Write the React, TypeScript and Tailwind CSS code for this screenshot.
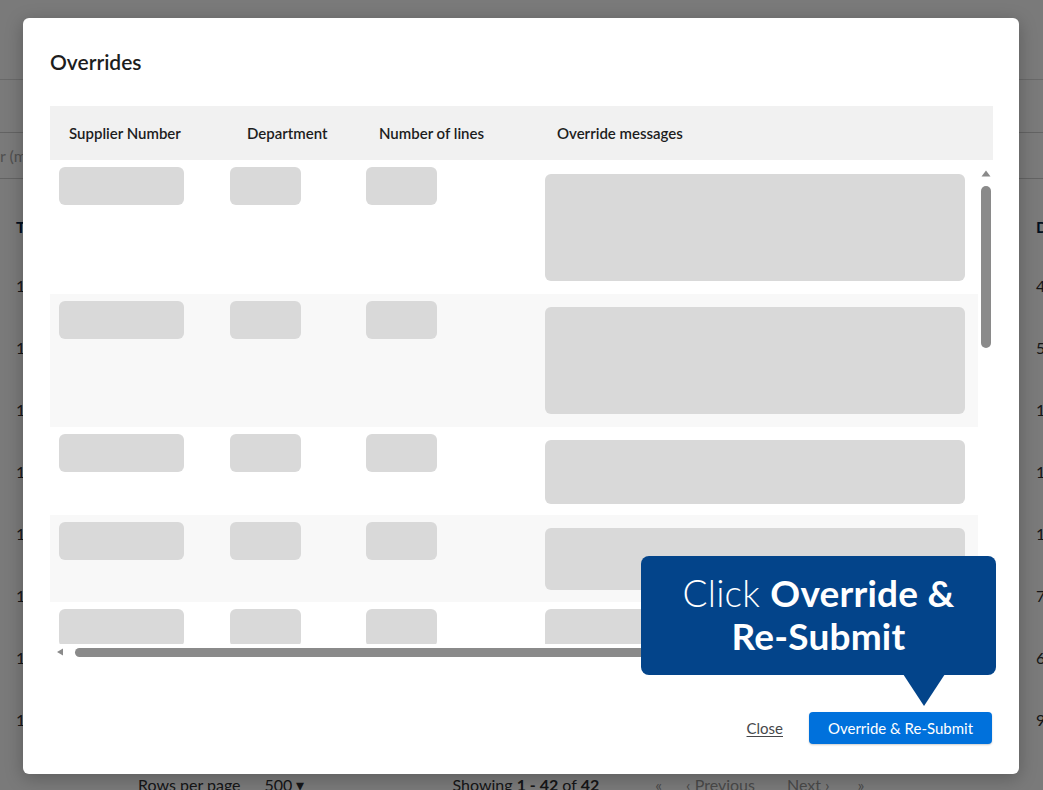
import React from 'react';

// Overrides dialog with skeleton rows, over a dimmed results page

const FONT = "font-['Lato','Liberation_Sans',sans-serif]";

const SKELETON_ROWS = [
  { row: 'h-[134px] bg-white', msg: 'h-[107px] mt-[14px]' },
  { row: 'h-[133px] bg-[#f8f8f8]', msg: 'h-[107px] mt-[13px]' },
  { row: 'h-[88px] bg-white', msg: 'h-[64px] mt-[13px]' },
  { row: 'h-[87px] bg-[#f8f8f8]', msg: 'h-[62px] mt-[13px]' },
  { row: 'h-[134px] bg-white', msg: 'h-[107px] mt-[7px]' },
];

const PAGE_ROWS = ['4', '5', '1', '1', '1', '7', '6', '9'];

const Block = ({ className }: { className: string }) => (
  <div className={`rounded-[6px] bg-[#d9d9d9] ${className}`} />
);

const BackgroundPage = () => (
  <div className="flex flex-col">
    <div className="h-[80px] border-b border-[#dcdcdc]" />
    <div className="h-[53px] border-b border-[#cfcfcf]" />
    <div className="h-[46px] border-b border-[#cfcfcf] flex items-center text-[16px] text-[#a8a8a8] whitespace-nowrap">
      r (max 10 digits)
    </div>
    <div className="pt-[20px]">
      <div className="h-[56px] grid grid-cols-[1020px_200px] pl-[16px] items-center text-[16px] font-bold text-[#041e42]">
        <span>Type</span>
        <span>Date</span>
      </div>
      {PAGE_ROWS.map((v, i) => (
        <div
          key={i}
          className="h-[62px] grid grid-cols-[1020px_200px] pl-[16px] items-center text-[16px] text-[#2e2f32]"
        >
          <span>1</span>
          <span>{v}</span>
        </div>
      ))}
    </div>
    <div className="flex items-center pt-[22px] text-[16px] text-[#2e2f32] whitespace-nowrap">
      <span className="ml-[138px]">Rows per page</span>
      <span className="ml-[24px]">500 ▾</span>
      <span className="ml-[148px]">
        Showing <b>1 - 42</b> of <b>42</b>
      </span>
      <span className="ml-[56px] text-[#9a9a9a]">«</span>
      <span className="ml-[24px] text-[#9a9a9a]">‹ Previous</span>
      <span className="ml-[32px] text-[#9a9a9a]">Next ›</span>
      <span className="ml-[28px] text-[#9a9a9a]">»</span>
    </div>
  </div>
);

const OverridesModal = () => (
  <div className="absolute left-[23px] top-[18px] w-[996px] h-[756px] rounded-[6px] bg-white shadow-[0_4px_18px_rgba(0,0,0,0.25)] flex flex-col pt-[30px] pb-[30px] pl-[27px] pr-[26px]">
    <h2 className="h-[28px] leading-[28px] text-[21px] font-semibold text-[#1d1d1d]">Overrides</h2>

    <div className="mt-[30px] flex flex-col">
      {/* header */}
      <div className="h-[54px] bg-[#f1f1f1] grid grid-cols-[171px_136px_179px_1fr] pl-[9px] items-center text-[15px] font-semibold text-[#1d1d1d] whitespace-nowrap">
        <span className="pl-[10px]">Supplier Number</span>
        <span className="pl-[17px]">Department</span>
        <span className="pl-[13px]">Number of lines</span>
        <span className="pl-[12px]">Override messages</span>
      </div>

      {/* body */}
      <div className="h-[500px] flex">
        <div className="flex-1 flex flex-col min-w-0">
          <div className="flex-1 overflow-hidden">
            {SKELETON_ROWS.map((r, i) => (
              <div key={i} className={`grid grid-cols-[171px_136px_179px_420px] pl-[9px] items-start shrink-0 ${r.row}`}>
                <Block className="mt-[7px] w-[125px] h-[38px]" />
                <Block className="mt-[7px] w-[71px] h-[38px]" />
                <Block className="mt-[7px] w-[71px] h-[38px]" />
                <Block className={`w-[420px] ${r.msg}`} />
              </div>
            ))}
          </div>
          {/* horizontal scrollbar */}
          <div className="h-[16px] flex items-center bg-white">
            <svg width="8" height="8" viewBox="0 0 8 8" className="ml-[6px]">
              <path d="M1 4 L7 0.5 L7 7.5 Z" fill="#8a8a8a" />
            </svg>
            <div className="ml-[11px] h-[9px] w-[820px] rounded-full bg-[#8a8a8a]" />
          </div>
        </div>
        {/* vertical scrollbar */}
        <div className="w-[15px] flex flex-col items-center pt-[10px] bg-white">
          <svg width="10" height="7" viewBox="0 0 10 7">
            <path d="M5 0.5 L9.5 6.5 L0.5 6.5 Z" fill="#8a8a8a" />
          </svg>
          <div className="mt-[9px] w-[10px] h-[162px] rounded-full bg-[#8a8a8a]" />
        </div>
      </div>
    </div>

    <div className="mt-[52px] flex items-center justify-end gap-[26px]">
      <button className="text-[15px] text-[#46474a] underline underline-offset-2">Close</button>
      <button className="h-[32px] w-[183px] mr-[1px] rounded-[4px] bg-[#0071dc] text-white text-[15px] shadow-[0_1px_2px_rgba(0,0,0,0.2)]">
        Override &amp; Re-Submit
      </button>
    </div>
  </div>
);

const Callout = () => (
  <div className="absolute left-[641px] top-[556px] w-[355px] h-[119px] rounded-[8px] bg-[#03448a] flex flex-col items-center justify-center pb-[4px] text-white text-[37px] leading-[43px] tracking-[0.2px]">
    <div className="whitespace-nowrap">
      <span className="font-light">Click </span>
      <span className="font-bold">Override &amp;</span>
    </div>
    <div className="font-bold whitespace-nowrap">Re-Submit</div>
    <svg width="42" height="32" viewBox="0 0 42 32" className="absolute left-[262px] top-[118px]">
      <path d="M0 0 L42 0 L21 32 Z" fill="#03448a" />
    </svg>
  </div>
);

export default function App() {
  return (
    <div className={`relative w-[1043px] h-[790px] overflow-hidden bg-white ${FONT}`}>
      <BackgroundPage />
      <div className="absolute inset-0 bg-black/[0.52]" />
      <OverridesModal />
      <Callout />
    </div>
  );
}
